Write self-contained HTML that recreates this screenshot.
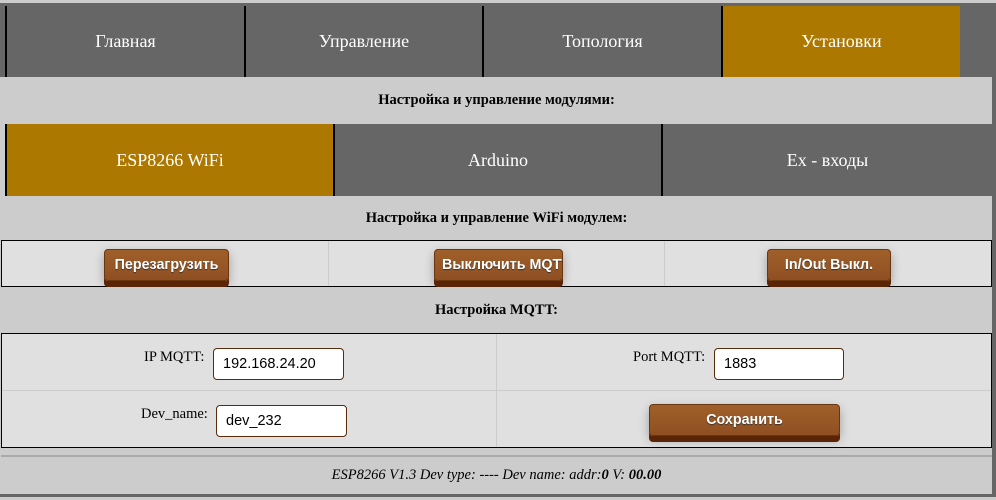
<!DOCTYPE html>
<html><head><meta charset="utf-8"><style>
*{box-sizing:border-box;margin:0;padding:0}
body{width:996px;height:500px;background:#ccc;position:relative;overflow:hidden;font-family:"Liberation Serif",serif}
.a{position:absolute}
.tab{position:absolute;background:#666;color:#fff;font-size:18px;display:flex;align-items:center;justify-content:center;border-left:2px solid #000}
.act{background:#ad7800}
.hd{position:absolute;left:1px;width:991px;background:#ccc;font-weight:bold;font-size:14.5px;display:flex;align-items:center;justify-content:center;color:#000}
.btn{position:absolute;color:#fff;font-family:"Liberation Sans",sans-serif;font-weight:bold;font-size:14.3px;border-radius:4px;background:linear-gradient(#a0602a,#8f4f22);box-shadow:0 6px 0 #5a2506,0 4px 10px rgba(0,0,0,.3);border:1px solid #6a3610;display:flex;align-items:center;justify-content:center;text-shadow:0 1px 1px #333;overflow:hidden;white-space:nowrap}
.lab{position:absolute;font-size:14.5px;color:#000}
.inp{position:absolute;background:#fff;border:1px solid #5a2a0a;border-radius:4px;font-family:"Liberation Sans",sans-serif;font-size:14.5px;padding-left:9px;display:flex;align-items:center;color:#000}
</style></head><body>
<div class="a" style="left:0;top:3px;width:992px;height:74px;background:#666"></div>
<div class="tab" style="left:5px;top:6px;width:239px;height:71px">Главная</div>
<div class="tab" style="left:244px;top:6px;width:238px;height:71px">Управление</div>
<div class="tab" style="left:482px;top:6px;width:239px;height:71px">Топология</div>
<div class="tab act" style="left:721px;top:6px;width:239px;height:71px">Установки</div>
<div class="hd" style="top:77px;height:47px">Настройка и управление модулями:</div>
<div class="tab act" style="left:5px;top:124px;width:328px;height:72px">ESP8266 WiFi</div>
<div class="tab" style="left:333px;top:124px;width:328px;height:72px">Arduino</div>
<div class="tab" style="left:661px;top:124px;width:331px;height:72px">Ex - входы</div>
<div class="hd" style="top:196px;height:44px">Настройка и управление WiFi модулем:</div>
<div class="a" style="left:1px;top:240px;width:991px;height:47px;background:#e0e0e0;border:1px solid #000"></div>
<div class="a" style="left:328px;top:241px;width:1px;height:45px;background:#ccc"></div>
<div class="a" style="left:664px;top:241px;width:1px;height:45px;background:#ccc"></div>
<div class="btn" style="left:104px;top:249px;width:125px;height:32px">Перезагрузить</div>
<div class="btn" style="left:434px;top:249px;width:129px;height:32px;justify-content:flex-start;padding-left:7px">Выключить MQTT</div>
<div class="btn" style="left:767px;top:249px;width:124px;height:32px">In/Out Выкл.</div>
<div class="hd" style="top:287px;height:46px">Настройка MQTT:</div>
<div class="a" style="left:1px;top:333px;width:991px;height:115px;background:#e0e0e0;border:1px solid #000"></div>
<div class="a" style="left:496px;top:334px;width:1px;height:113px;background:#ccc"></div>
<div class="a" style="left:2px;top:390px;width:989px;height:1px;background:#ccc"></div>
<div class="lab" style="left:144px;top:349px">IP MQTT:</div>
<div class="inp" style="left:213px;top:348px;width:131px;height:32px">192.168.24.20</div>
<div class="lab" style="left:633px;top:349px">Port MQTT:</div>
<div class="inp" style="left:714px;top:348px;width:130px;height:32px">1883</div>
<div class="lab" style="left:141px;top:406px">Dev_name:</div>
<div class="inp" style="left:216px;top:405px;width:131px;height:32px">dev_232</div>
<div class="btn" style="left:649px;top:404px;width:191px;height:32px">Сохранить</div>
<div class="a" style="left:1px;top:455px;width:991px;height:2px;background:#aaa"></div>
<div class="a" style="left:1px;top:457px;width:991px;height:37px;background:#ccc;display:flex;align-items:center;justify-content:center;font-style:italic;font-size:14.5px">ESP8266 V1.3 Dev type: ---- Dev name: addr:<b>0</b>&nbsp;V: <b>&nbsp;00.00</b></div>
<div class="a" style="left:992px;top:3px;width:4px;height:494px;background:#666"></div>
<div class="a" style="left:0;top:494px;width:996px;height:3px;background:#666"></div>
</body></html>
